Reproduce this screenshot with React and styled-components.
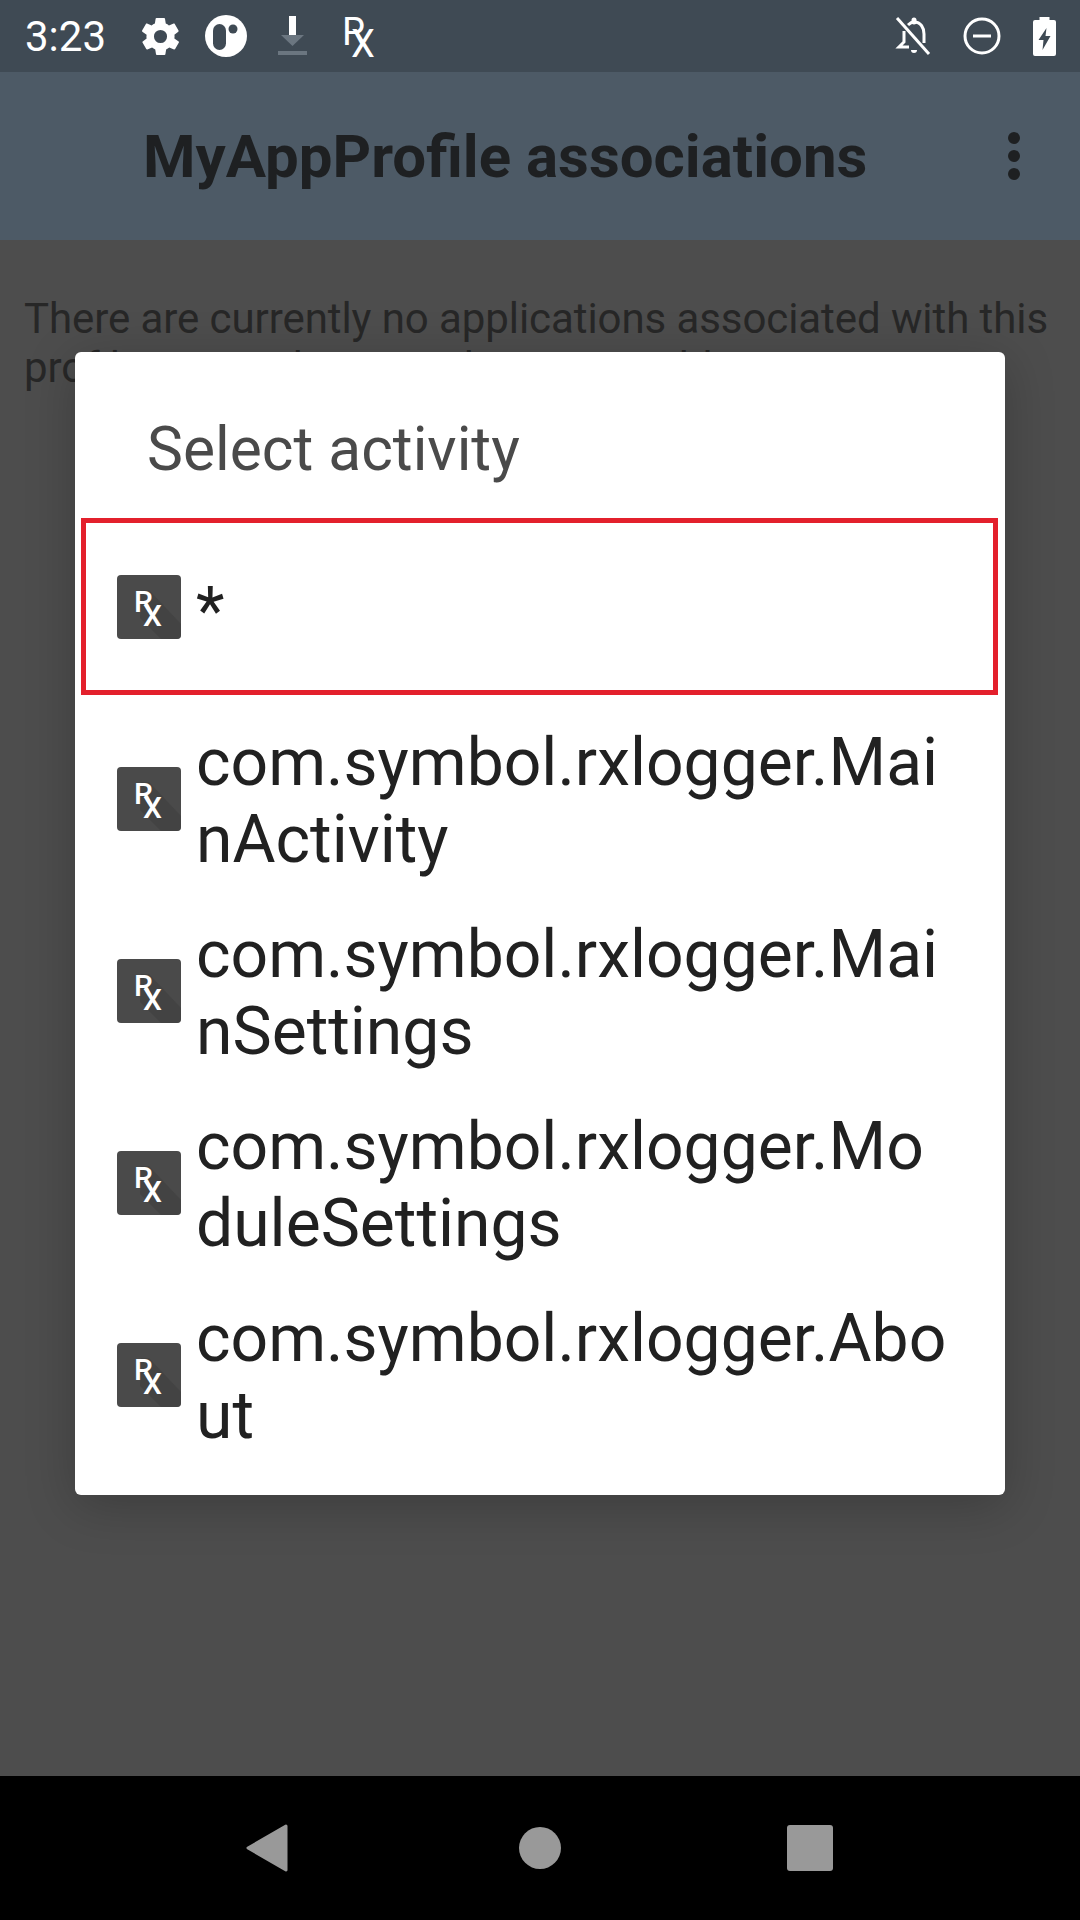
import React from "react";
import styled, { createGlobalStyle } from "styled-components";

const activities = [
    "com.symbol.rxlogger.MainActivity",
    "com.symbol.rxlogger.MainSettings",
    "com.symbol.rxlogger.ModuleSettings",
    "com.symbol.rxlogger.About",
];

function AppIcon() {
    return (
        <IconTile>
            <svg width="64" height="64" viewBox="0 0 64 64">
                <path d="M24 15h8l32 34v15H44L23 43z" fill="#404040" opacity="0.6" />
                <LogoText x="17 26" y="37 51" fontSize="30" fontWeight="500">RX</LogoText>
            </svg>
        </IconTile>
    );
}

export default function App() {
    return (
        <>
            <Global />
            <Screen>
                <StatusBar>
                    <Time>3:23</Time>
                    <StatusIcon $left={33}>
                        <svg width="45" height="45" viewBox="0 0 24 24" fill="#fff">
                            <path d="M19.4 13c0-.3.1-.6.1-1s0-.7-.1-1l2.100-1.600c.2-.2.2-.4.1-.6l-2-3.500c-.1-.2-.4-.3-.6-.2l-2.500 1c-.5-.4-1.100-.7-1.700-1l-.4-2.600c0-.2-.2-.4-.5-.4h-4c-.3 0-.5.2-.5.4l-.4 2.600c-.6.3-1.200.6-1.700 1l-2.500-1c-.2-.1-.5 0-.6.2l-2 3.500c-.1.2-.1.4.1.6L4.600 11c0 .3-.1.700-.1 1s0 .7.1 1l-2.100 1.600c-.2.2-.2.4-.1.6l2 3.500c.1.2.4.3.6.2l2.500-1c.5.4 1.100.7 1.700 1l.4 2.600c0 .2.2.4.5.4h4c.3 0 .5-.2.5-.4l.4-2.600c.6-.3 1.200-.6 1.700-1l2.500 1c.2.1.5 0 .6-.2l2-3.500c.1-.2.1-.4-.1-.6zM12 15.500a3.500 3.500 0 1 1 0-7 3.500 3.500 0 0 1 0 7z" />
                        </svg>
                    </StatusIcon>
                    <StatusIcon $left={22}>
                        <svg width="42" height="42" viewBox="0 0 42 42">
                            <circle cx="21" cy="21" r="21" fill="#fff" />
                            <rect x="8" y="9" width="13" height="26" rx="6.500" fill="#3f4a54" />
                            <circle cx="28" cy="14" r="4.500" fill="#3f4a54" />
                        </svg>
                    </StatusIcon>
                    <StatusIcon $left={31}>
                        <svg width="29" height="40" viewBox="0 0 29 40">
                            <rect x="11" y="0" width="7" height="19" fill="#fff" />
                            <path d="M3 19h23L14.500 30z" fill="#6b7680" />
                            <rect x="0" y="35" width="29" height="4" fill="#6b7680" />
                        </svg>
                    </StatusIcon>
                    <StatusIcon $left={36}>
                        <svg width="46" height="60" viewBox="0 0 46 60">
                            <LogoText x="-1 8" y="39 51" fontSize="38">RX</LogoText>
                        </svg>
                    </StatusIcon>
                    <StatusIcon $push>
                        <svg width="36" height="40" viewBox="0 0 36 40" fill="none" stroke="#fff" strokeWidth="3">
                            <path d="M2 2l32 36" />
                            <path d="M14 31H4l5-5V15M13 9c2-2 4-3 6-3 7 0 10 6 10 12v9" />
                            <path d="M19 6V4" strokeLinecap="round" strokeWidth="5" />
                            <path d="M16 34a3 3 0 0 0 6 0z" fill="#fff" stroke="none" />
                        </svg>
                    </StatusIcon>
                    <StatusIcon $left={32}>
                        <svg width="38" height="38" viewBox="0 0 38 38" fill="none" stroke="#fff" strokeWidth="3">
                            <circle cx="19" cy="19" r="17" />
                            <path d="M10 19h18" />
                        </svg>
                    </StatusIcon>
                    <StatusIcon $left={32}>
                        <svg width="23" height="39" viewBox="0 0 23 39">
                            <path fill="#fff" d="M6.500 0h10v3h4.500a2 2 0 0 1 2 2v32a2 2 0 0 1-2 2H2a2 2 0 0 1-2-2V5a2 2 0 0 1 2-2h4.500z" />
                            <path fill="#3f4a54" d="M13.500 11L5.500 23h5l-1 10 8-14h-5z" />
                        </svg>
                    </StatusIcon>
                </StatusBar>

                <AppBar>
                    <Title>MyAppProfile associations</Title>
                    <MenuDots><i /><i /><i /></MenuDots>
                </AppBar>

                <Content>
                    <Message>There are currently no applications associated with this profile. Press the menu button to add a new one.</Message>
                    <Dialog>
                        <DialogTitle>Select activity</DialogTitle>
                        <Row $selected>
                            <AppIcon />
                            <RowLabel $selected>*</RowLabel>
                        </Row>
                        {activities.map((a) => (
                            <Row key={a}>
                                <AppIcon />
                                <RowLabel>{a}</RowLabel>
                            </Row>
                        ))}
                    </Dialog>
                </Content>

                <NavBar>
                    <svg width="42" height="48" viewBox="0 0 42 48">
                        <path d="M40 2L2 24l38 22z" fill="#999" stroke="#999" strokeWidth="3" strokeLinejoin="round" />
                    </svg>
                    <HomeDot />
                    <RecentBox />
                </NavBar>
            </Screen>
        </>
    );
}

const Global = createGlobalStyle`
    html, body {
        margin: 0;
        padding: 0;
        background: #4d4d4d;
    }
    * {
        box-sizing: border-box;
    }
`;

const Screen = styled.div`
    width: 1080px;
    height: 1920px;
    display: flex;
    flex-direction: column;
    overflow: hidden;
    font-family: Roboto, "Liberation Sans", sans-serif;
`;

const StatusBar = styled.div`
    height: 72px;
    background: #3f4a54;
    display: flex;
    align-items: center;
    padding: 0 24px 0 25px;
    color: #fff;
`;

const Time = styled.span`
    font-size: 42px;
    width: 80px;
    white-space: nowrap;
`;

const StatusIcon = styled.span`
    display: flex;
    margin-left: ${(p) => (p.$push ? "auto" : `${p.$left}px`)};
`;

const LogoText = styled.text`
    font-family: Roboto, "Liberation Sans", sans-serif;
    fill: #fff;
`;

const AppBar = styled.div`
    height: 168px;
    background: #4d5a66;
    display: flex;
    align-items: center;
    padding: 0 60px 0 143px;
`;

const Title = styled.h1`
    margin: 0;
    font-size: 60px;
    font-weight: 700;
    color: #1e2022;
`;

const MenuDots = styled.div`
    margin-left: auto;
    display: flex;
    flex-direction: column;
    gap: 6px;

    i {
        display: block;
        width: 12px;
        height: 12px;
        border-radius: 50%;
        background: #1e2022;
    }
`;

const Content = styled.div`
    position: relative;
    flex: 1;
    background: #4d4d4d;
    padding: 54px 24px 0;
`;

const Message = styled.p`
    margin: 0;
    font-size: 42px;
    letter-spacing: -0.08px;
    color: #272727;
`;

const Dialog = styled.div`
    position: absolute;
    left: 75px;
    top: 112px;
    width: 930px;
    height: 1143px;
    background: #fff;
    border-radius: 6px;
    box-shadow: 0 10px 50px rgba(0, 0, 0, 0.22);
    padding: 0 7px 0 6px;
`;

const DialogTitle = styled.div`
    height: 166px;
    padding: 62px 0 0 66px;
    font-size: 60.5px;
    color: #4a4a4a;
`;

const Row = styled.div`
    display: flex;
    align-items: center;
    height: ${(p) => (p.$selected ? "177px" : "192px")};
    margin-bottom: ${(p) => (p.$selected ? "8px" : "0")};
    padding-left: ${(p) => (p.$selected ? "31px" : "36px")};
    border: ${(p) => (p.$selected ? "5px solid #e3202c" : "none")};
`;

const IconTile = styled.div`
    width: 64px;
    height: 64px;
    flex: none;
    border-radius: 4px;
    background: #4a4a4a;
    overflow: hidden;

    svg {
        display: block;
    }
`;

const RowLabel = styled.div`
    margin-left: 15px;
    padding-top: ${(p) => (p.$selected ? "10px" : "4px")};
    width: 755px;
    font-size: 66px;
    color: #212121;
    word-break: break-all;
`;

const NavBar = styled.div`
    height: 144px;
    background: #000;
    display: flex;
    align-items: center;
    padding-left: 246px;
`;

const HomeDot = styled.div`
    width: 42px;
    height: 42px;
    margin: 0 226px 0 231px;
    border-radius: 50%;
    background: #999;
`;

const RecentBox = styled.div`
    width: 46px;
    height: 46px;
    border-radius: 3px;
    background: #999;
`;
